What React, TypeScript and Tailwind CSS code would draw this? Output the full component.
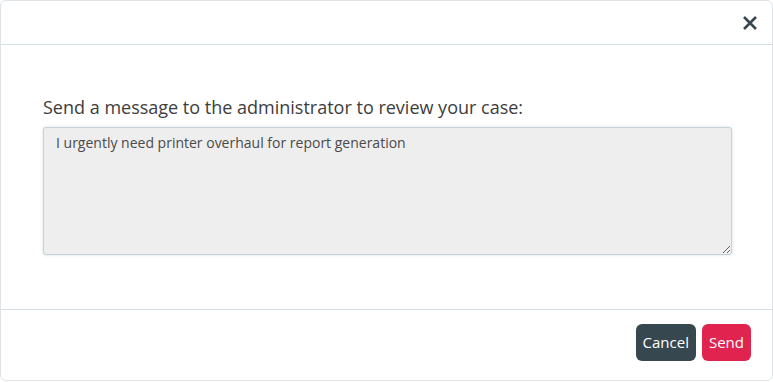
import React from "react";

export default function App() {
  return (
    <div className="w-[773px] h-[382px] bg-white" style={{ fontFamily: '"Open Sans", sans-serif' }}>
      <div className="w-[773px] h-[381px] border border-[#dde3e6] rounded-[6px] flex flex-col">
        <div className="h-[44px] border-b border-[#d3dfe2] flex items-center justify-end pr-[14px]">
          <svg width="16" height="16" viewBox="0 0 16 16" className="mt-[1px]">
            <path d="M2 2 L14 14 M14 2 L2 14" stroke="#37474f" strokeWidth="2.6" strokeLinecap="butt" />
          </svg>
        </div>
        <div className="flex-1 px-[42px] pt-[50px]">
          <label className="block text-[18px] leading-[24px] text-[#3d3d3d] mb-[8px]">
            Send a message to the administrator to review your case:
          </label>
          <textarea
            className="block w-[689px] h-[128px] bg-[#eeeeee] border border-[#c5d3d9] rounded-[3px] shadow-[0_0_3px_rgba(120,150,170,0.35)] pl-[12px] pr-[11px] py-[4px] text-[14px] leading-[22px] text-[#4a4a4a] outline-none"
            style={{ fontFamily: '"Open Sans", sans-serif' }}
            defaultValue="I urgently need printer overhaul for report generation"
          />
        </div>
        <div className="h-[71px] border-t border-[#d3dfe2] flex items-center justify-end gap-[6px] pr-[21px] pb-[5px]">
          <button className="h-[37px] px-[7px] rounded-[6px] bg-[#37474f] text-white text-[15px]">Cancel</button>
          <button className="h-[37px] px-[7px] rounded-[6px] bg-[#e0234f] text-white text-[15px]">Send</button>
        </div>
      </div>
    </div>
  );
}
